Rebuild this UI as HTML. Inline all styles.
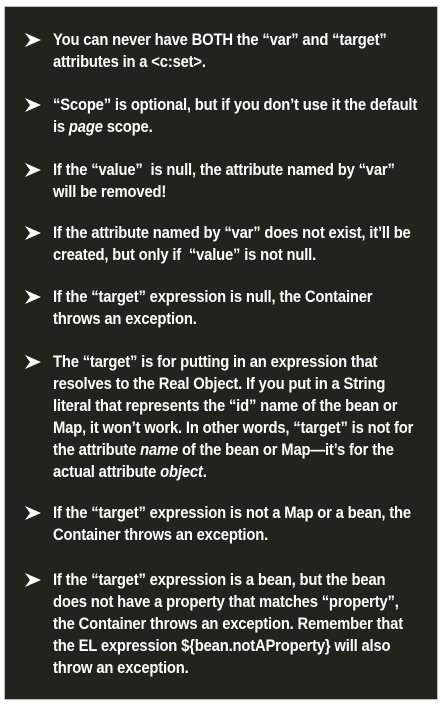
<!DOCTYPE html>
<html><head><meta charset="utf-8"><style>
html,body{margin:0;padding:0;background:#fff;width:444px;height:707px;overflow:hidden}
.box{position:absolute;left:4px;top:6px;width:432px;height:692px;background:#23231e;border:1px solid #bdbdbd}
.it{position:absolute;left:0;width:440px}
.ar{position:absolute;left:25px;width:0;height:0;border-left:16px solid #fff;border-top:7px solid transparent;border-bottom:7px solid transparent}
.ar:after{content:"";position:absolute;left:-16px;top:-7px;width:0;height:0;border-left:5px solid #23231e;border-top:7px solid transparent;border-bottom:7px solid transparent}
.tx{position:absolute;left:53px;top:0;color:#fff;font-family:"Liberation Sans",sans-serif;font-weight:bold;font-size:17px;line-height:22px;white-space:nowrap;transform:scaleX(0.87);transform-origin:0 0;letter-spacing:-0.2px}
</style></head><body>
<div class="box"></div>
<div class="it" style="top:29px"><div class="ar" style="top:4px"></div><div class="tx">You can never have BOTH the “var” and “target”<br>attributes in a &lt;c:set&gt;.</div></div>
<div class="it" style="top:94px"><div class="ar" style="top:4px"></div><div class="tx">“Scope” is optional, but if you don’t use it the default<br>is <i>page</i> scope.</div></div>
<div class="it" style="top:159px"><div class="ar" style="top:4px"></div><div class="tx">If the “value”&nbsp; is null, the attribute named by “var”<br>will be removed!</div></div>
<div class="it" style="top:222px"><div class="ar" style="top:4px"></div><div class="tx">If the attribute named by “var” does not exist, it’ll be<br>created, but only if&nbsp; “value” is not null.</div></div>
<div class="it" style="top:286px"><div class="ar" style="top:4px"></div><div class="tx">If the “target” expression is null, the Container<br>throws an exception.</div></div>
<div class="it" style="top:351px"><div class="ar" style="top:4px"></div><div class="tx">The “target” is for putting in an expression that<br>resolves to the Real Object. If you put in a String<br>literal that represents the “id” name of the bean or<br>Map, it won’t work. In other words, “target” is not for<br>the attribute <i>name</i> of the bean or Map—it’s for the<br>actual attribute <i>object</i>.</div></div>
<div class="it" style="top:502px"><div class="ar" style="top:4px"></div><div class="tx">If the “target” expression is not a Map or a bean, the<br>Container throws an exception.</div></div>
<div class="it" style="top:569px"><div class="ar" style="top:4px"></div><div class="tx">If the “target” expression is a bean, but the bean<br>does not have a property that matches “property”,<br>the Container throws an exception. Remember that<br>the EL expression ${bean.notAProperty} will also<br>throw an exception.</div></div>
</body></html>
